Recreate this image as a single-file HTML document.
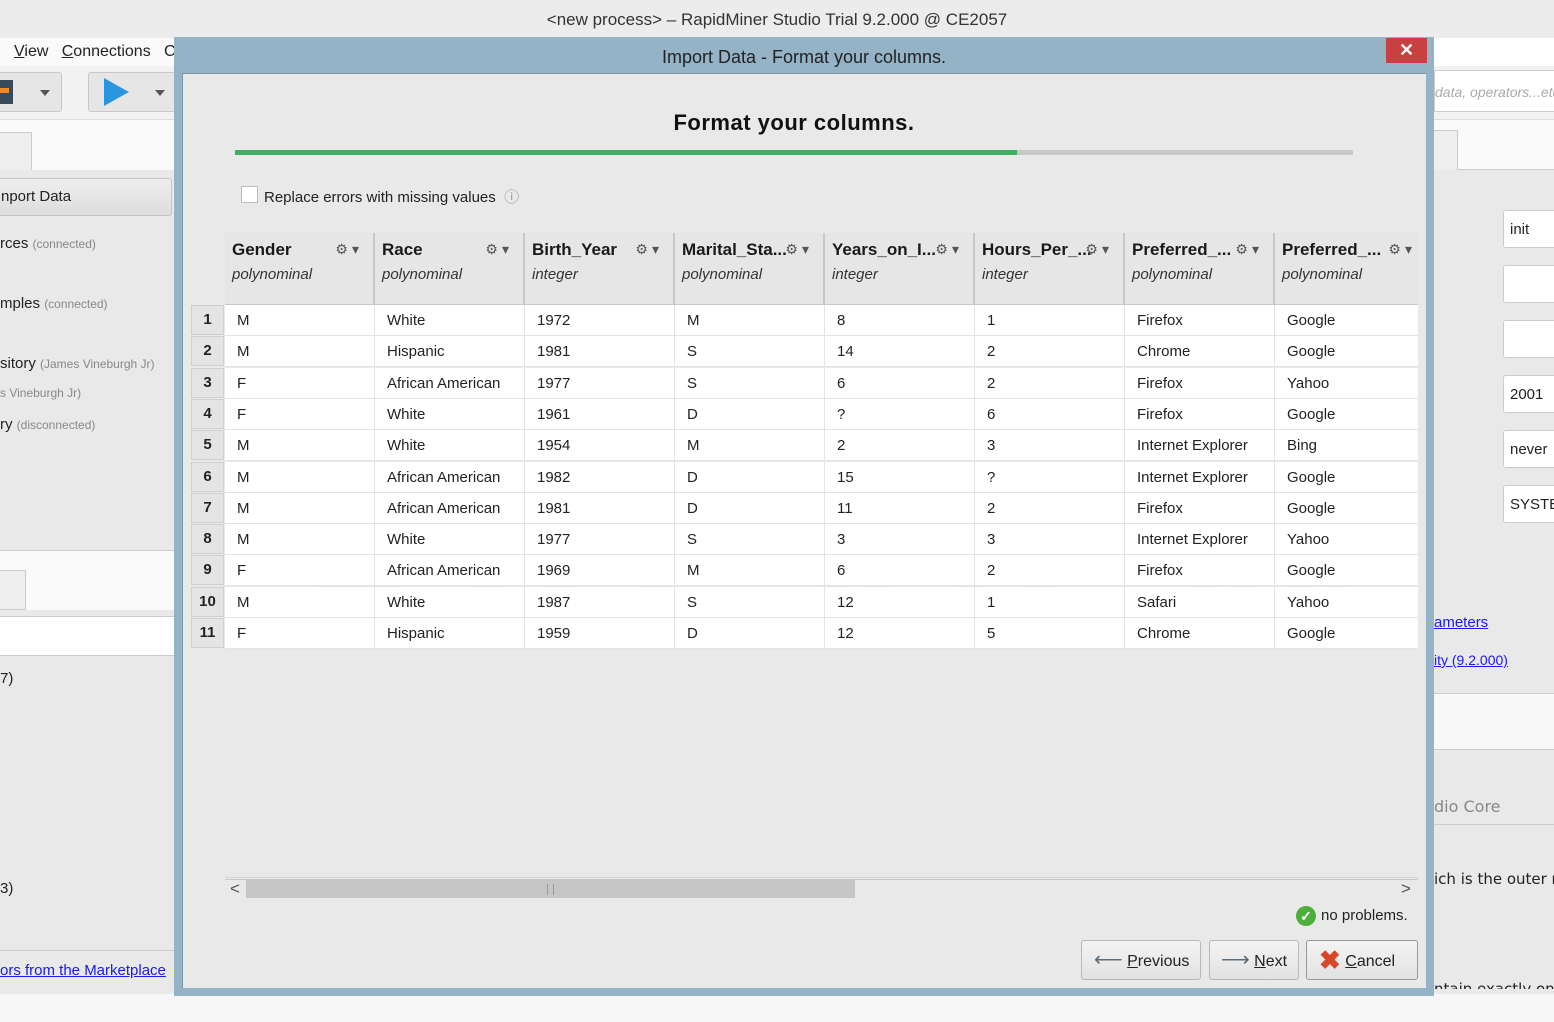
<!DOCTYPE html>
<html><head><meta charset="utf-8"><style>
*{margin:0;padding:0;box-sizing:border-box}
body{width:1554px;height:1022px;overflow:hidden;background:#e9e9e9;font-family:"Liberation Sans",Arial,sans-serif;font-size:15px;color:#222;position:relative}
.a{position:absolute;white-space:nowrap}
.hd{position:absolute;top:233px;height:72px;background:#e6e6e6;border-right:2px solid #c8c8c8;border-bottom:1px solid #c8c8c8}
.hd b{position:absolute;left:7px;top:7px;font-size:17px;color:#1a1a1a}
.hd i{position:absolute;left:7px;top:33px;font-size:15px;color:#333}
.hd .g{position:absolute;right:10px;top:8px;font-size:14px;color:#555;letter-spacing:4px}
.row{position:absolute;left:225px;width:1193px;height:31px;background:#fff;border-bottom:1px solid #e4e4e4}
.row span{position:absolute;top:7px;font-size:15px;color:#222}
.rn{position:absolute;left:191px;width:33px;height:30px;background:#e4e4e4;border:1px solid #cfcfcf;font-weight:bold;text-align:center;line-height:28px;font-size:15px}
.btn{position:absolute;top:940px;height:40px;background:linear-gradient(#f4f4f4,#e2e2e2);border:1px solid #b8b8b8;border-radius:3px;font-size:16px;line-height:38px;color:#222;white-space:nowrap}
.rf{position:absolute;left:1503px;width:60px;height:38px;background:#fff;border:1px solid #ccc;border-radius:3px;padding:10px 6px;font-size:15px}
</style></head><body>
<div class="a" style="left:0;top:0;width:1554px;height:38px;background:#ececec;text-align:center;line-height:40px;font-size:17px;color:#333">&lt;new process&gt; – RapidMiner Studio Trial 9.2.000 @ CE2057</div>
<div class="a" style="left:0;top:38px;width:1554px;height:28px;background:#fafafa"></div>
<div class="a" style="left:14px;top:43px;font-size:16px"><u>V</u>iew &nbsp;&nbsp;<u>C</u>onnections &nbsp;&nbsp;C</div>
<div class="a" style="left:0;top:66px;width:1554px;height:54px;background:#f2f2f2;border-bottom:1px solid #ddd"></div>
<div class="a" style="left:-10px;top:72px;width:72px;height:40px;background:#e6e6e6;border:1px solid #c8c8c8;border-radius:3px"></div>
<div class="a" style="left:0;top:80px;width:13px;height:24px;background:#3a4a58"></div><div class="a" style="left:0;top:88px;width:9px;height:5px;background:#f08a24"></div>
<div class="a" style="left:40px;top:90px;border:5px solid transparent;border-top:6px solid #555"></div>
<div class="a" style="left:88px;top:72px;width:90px;height:40px;background:#e6e6e6;border:1px solid #c8c8c8;border-radius:3px"></div>
<div class="a" style="left:104px;top:78px;width:0;height:0;border-top:14px solid transparent;border-bottom:14px solid transparent;border-left:25px solid #2a96e0"></div>
<div class="a" style="left:155px;top:90px;border:5px solid transparent;border-top:6px solid #555"></div>
<div class="a" style="left:0;top:120px;width:174px;height:50px;background:#fafafa"></div>
<div class="a" style="left:0;top:132px;width:32px;height:38px;background:#eee;border:1px solid #ccc;border-bottom:none;border-left:none"></div>
<div class="a" style="left:-6px;top:178px;width:178px;height:38px;background:linear-gradient(#eee,#ddd);border:1px solid #c4c4c4;border-radius:3px;padding:9px 6px;font-size:15px">nport Data</div>
<div class="a" style="left:0;top:235px;font-size:15px">rces <span style="color:#888;font-size:12px">(connected)</span></div>
<div class="a" style="left:0;top:295px;font-size:15px">mples <span style="color:#888;font-size:12px">(connected)</span></div>
<div class="a" style="left:0;top:355px;font-size:15px">sitory <span style="color:#888;font-size:12px">(James Vineburgh Jr)</span></div>
<div class="a" style="left:0;top:386px;font-size:12px;color:#888">s Vineburgh Jr)</div>
<div class="a" style="left:0;top:416px;font-size:15px">ry <span style="color:#888;font-size:12px">(disconnected)</span></div>
<div class="a" style="left:0;top:550px;width:174px;height:60px;background:#fafafa;border-top:1px solid #ccc"></div>
<div class="a" style="left:0;top:570px;width:26px;height:40px;background:#eee;border:1px solid #ccc;border-left:none"></div>
<div class="a" style="left:0;top:616px;width:174px;height:40px;background:#fff;border-top:1px solid #ccc;border-bottom:1px solid #ccc"></div>
<div class="a" style="left:0;top:670px;font-size:15px">7)</div>
<div class="a" style="left:0;top:880px;font-size:15px">3)</div>
<div class="a" style="left:0;top:950px;width:174px;height:1px;background:#ccc"></div>
<div class="a" style="left:0;top:962px;font-size:15px;color:#1a1aee;text-decoration:underline">ors from the Marketplace</div>
<div class="a" style="left:0;top:994px;width:1554px;height:28px;background:#f7f7f7"></div>
<div class="a" style="left:1434px;top:38px;width:120px;height:28px;background:#fff"></div>
<div class="a" style="left:1434px;top:70px;width:130px;height:42px;background:#fff;border:1px solid #ccc;font-style:italic;color:#aaa;font-size:14px;padding:13px 0;overflow:hidden">data, operators...etc</div>
<div class="a" style="left:1434px;top:120px;width:120px;height:50px;background:#fafafa;border-bottom:1px solid #ccc"></div>
<div class="a" style="left:1434px;top:130px;width:24px;height:40px;background:#eee;border:1px solid #ccc;border-left:none;border-bottom:none"></div>
<div class="rf" style="top:210px">init</div>
<div class="rf" style="top:265px"></div>
<div class="rf" style="top:320px"></div>
<div class="rf" style="top:375px">2001</div>
<div class="rf" style="top:430px">never</div>
<div class="rf" style="top:485px">SYSTE</div>
<div class="a" style="left:1434px;top:614px;font-size:15px;color:#1a1aee;text-decoration:underline">ameters</div>
<div class="a" style="left:1434px;top:652px;font-size:14px;color:#1a1aee;text-decoration:underline">ity (9.2.000)</div>
<div class="a" style="left:1434px;top:693px;width:120px;height:57px;background:#f8f8f8;border-top:1px solid #ccc;border-bottom:1px solid #ccc"></div>
<div class="a" style="left:1434px;top:797px;font-size:16px;color:#888;font-family:'DejaVu Sans',sans-serif">dio Core</div>
<div class="a" style="left:1434px;top:824px;width:120px;height:1px;background:#ccc"></div>
<div class="a" style="left:1434px;top:870px;font-size:15px;font-family:'DejaVu Sans',sans-serif">ich is the outer r</div>
<div class="a" style="left:1434px;top:980px;font-size:15px;font-family:'DejaVu Sans',sans-serif;height:9px;overflow:hidden">ntain exactly on</div>
<div class="a" style="left:174px;top:37px;width:1260px;height:959px;background:#94b3c6"></div>
<div class="a" style="left:174px;top:37px;width:1260px;height:36px;text-align:center;line-height:40px;font-size:18px;color:#222">Import Data - Format your columns.</div>
<div class="a" style="left:1386px;top:38px;width:41px;height:25px;background:#c94040;color:#fff;text-align:center;line-height:24px;font-size:18px;font-weight:bold">✕</div>
<div class="a" style="left:182px;top:73px;width:1244px;height:915px;background:#e9e9e9;border-top:1px solid #7d95a6;border-left:1px solid #7d95a6"></div>
<div class="a" style="left:182px;top:110px;width:1224px;text-align:center;font-size:22px;font-weight:bold;color:#111;letter-spacing:0.5px">Format your columns.</div>
<div class="a" style="left:235px;top:150px;width:1118px;height:5px;background:#c8c8c8"></div>
<div class="a" style="left:235px;top:150px;width:782px;height:5px;background:#3cb063"></div>
<div class="a" style="left:241px;top:186px;width:17px;height:17px;background:#fff;border:1px solid #bbb"></div>
<div class="a" style="left:264px;top:186px;font-size:15px">Replace errors with missing values &nbsp;<span style="color:#999">ⓘ</span></div>
<div class="a" style="left:225px;top:305px;width:1193px;height:573px;background:#e9e9e9;border-bottom:1px solid #d4d4d4"></div>
<div class="a" style="left:300px;top:440px;font-size:220px;font-weight:bold;color:rgba(0,0,0,0.025);letter-spacing:10px">PREVIEW</div>
<div class="hd" style="left:225px;width:150px"><b>Gender</b><span class="g">⚙▾</span><i>polynominal</i></div>
<div class="hd" style="left:375px;width:150px"><b>Race</b><span class="g">⚙▾</span><i>polynominal</i></div>
<div class="hd" style="left:525px;width:150px"><b>Birth_Year</b><span class="g">⚙▾</span><i>integer</i></div>
<div class="hd" style="left:675px;width:150px"><b>Marital_Sta...</b><span class="g">⚙▾</span><i>polynominal</i></div>
<div class="hd" style="left:825px;width:150px"><b>Years_on_I...</b><span class="g">⚙▾</span><i>integer</i></div>
<div class="hd" style="left:975px;width:150px"><b>Hours_Per_...</b><span class="g">⚙▾</span><i>integer</i></div>
<div class="hd" style="left:1125px;width:150px"><b>Preferred_...</b><span class="g">⚙▾</span><i>polynominal</i></div>
<div class="hd" style="left:1275px;width:143px;border-right:none"><b>Preferred_...</b><span class="g" style="right:2px">⚙▾</span><i>polynominal</i></div>
<div id="rows"></div>
<script>
var d=[["M","White","1972","M","8","1","Firefox","Google"],["M","Hispanic","1981","S","14","2","Chrome","Google"],["F","African American","1977","S","6","2","Firefox","Yahoo"],["F","White","1961","D","?","6","Firefox","Google"],["M","White","1954","M","2","3","Internet Explorer","Bing"],["M","African American","1982","D","15","?","Internet Explorer","Google"],["M","African American","1981","D","11","2","Firefox","Google"],["M","White","1977","S","3","3","Internet Explorer","Yahoo"],["F","African American","1969","M","6","2","Firefox","Google"],["M","White","1987","S","12","1","Safari","Yahoo"],["F","Hispanic","1959","D","12","5","Chrome","Google"]];
var h="";d.forEach(function(r,i){var t=305+Math.round(i*31.3);h+='<div class="rn" style="top:'+t+'px">'+(i+1)+'</div><div class="row" style="top:'+t+'px">';r.forEach(function(c,j){h+='<span style="left:'+(j*150+12)+'px">'+c+'</span>'});for(var k=1;k<8;k++)h+='<i style="position:absolute;left:'+(k*150-1)+'px;top:0;width:1px;height:31px;background:#e4e4e4"></i>';h+='</div>'});document.getElementById('rows').innerHTML=h;
</script>
<div class="a" style="left:225px;top:879px;width:1193px;height:1px;background:#c8c8c8"></div>
<div class="a" style="left:230px;top:879px;font-size:17px;color:#555">&lt;</div>
<div class="a" style="left:1401px;top:879px;font-size:17px;color:#555">&gt;</div>
<div class="a" style="left:246px;top:880px;width:609px;height:18px;background:#c6c6c6"></div>
<div class="a" style="left:547px;top:884px;width:7px;height:11px;border-left:1px solid #999;border-right:1px solid #999"></div>
<div class="a" style="left:1296px;top:906px;width:20px;height:20px;border-radius:50%;background:#4caf3a;color:#fff;text-align:center;font-size:14px;line-height:20px;font-weight:bold">✓</div>
<div class="a" style="left:1321px;top:907px;font-size:15px">no problems.</div>
<div class="btn" style="left:1081px;width:120px;padding-left:12px"><span style="color:#5a6a78;font-size:20px">⟵</span> <u>P</u>revious</div>
<div class="btn" style="left:1209px;width:90px;padding-left:11px"><span style="color:#5a6a78;font-size:20px">⟶</span> <u>N</u>ext</div>
<div class="btn" style="left:1306px;width:112px;padding-left:12px;border-color:#999"><span style="color:#d8472a;font-size:26px;font-weight:bold;vertical-align:-3px">✖</span> <u>C</u>ancel</div>
</body></html>
